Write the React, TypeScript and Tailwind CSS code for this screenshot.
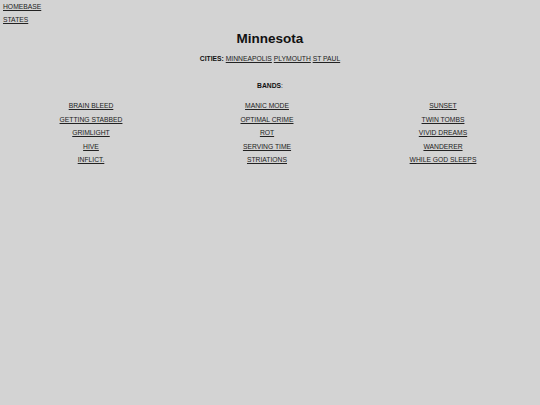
const CITIES = ["MINNEAPOLIS", "PLYMOUTH", "ST PAUL"];

const BANDS = [
  ["BRAIN BLEED", "MANIC MODE", "SUNSET"],
  ["GETTING STABBED", "OPTIMAL CRIME", "TWIN TOMBS"],
  ["GRIMLIGHT", "ROT", "VIVID DREAMS"],
  ["HIVE", "SERVING TIME", "WANDERER"],
  ["INFLICT.", "STRIATIONS", "WHILE GOD SLEEPS"],
];

function NavLink({ children }: { children: string }) {
  return (
    <a href="#" className="text-[#222] underline underline-offset-[1px]">
      {children}
    </a>
  );
}

export default function App() {
  return (
    <div className="min-h-[405px] w-[540px] bg-[#d3d3d3] font-['Liberation_Sans',Arial,sans-serif] text-[6.75px] leading-[13.5px] text-[#111]">
      <nav className="flex flex-col px-[3px] leading-[13px]">
        <div>
          <NavLink>HOMEBASE</NavLink>
        </div>
        <div>
          <NavLink>STATES</NavLink>
        </div>
      </nav>

      <h1 className="mt-[5px] text-center text-[13.5px] font-bold leading-[16px]">Minnesota</h1>

      <p className="mt-[5px] text-center">
        <span className="font-bold">CITIES:</span>{" "}
        {CITIES.map((city, i) => (
          <span key={city}>
            <NavLink>{city}</NavLink>
            {i < CITIES.length - 1 ? " " : ""}
          </span>
        ))}
      </p>

      <p className="mt-[13.5px] text-center">
        <span className="font-bold">BANDS</span>:
      </p>

      <div className="mt-[6.5px] ml-[3px] grid w-[528px] grid-cols-3">
        {BANDS.flat().map((band) => (
          <div key={band} className="text-center">
            <NavLink>{band}</NavLink>
          </div>
        ))}
      </div>
    </div>
  );
}
